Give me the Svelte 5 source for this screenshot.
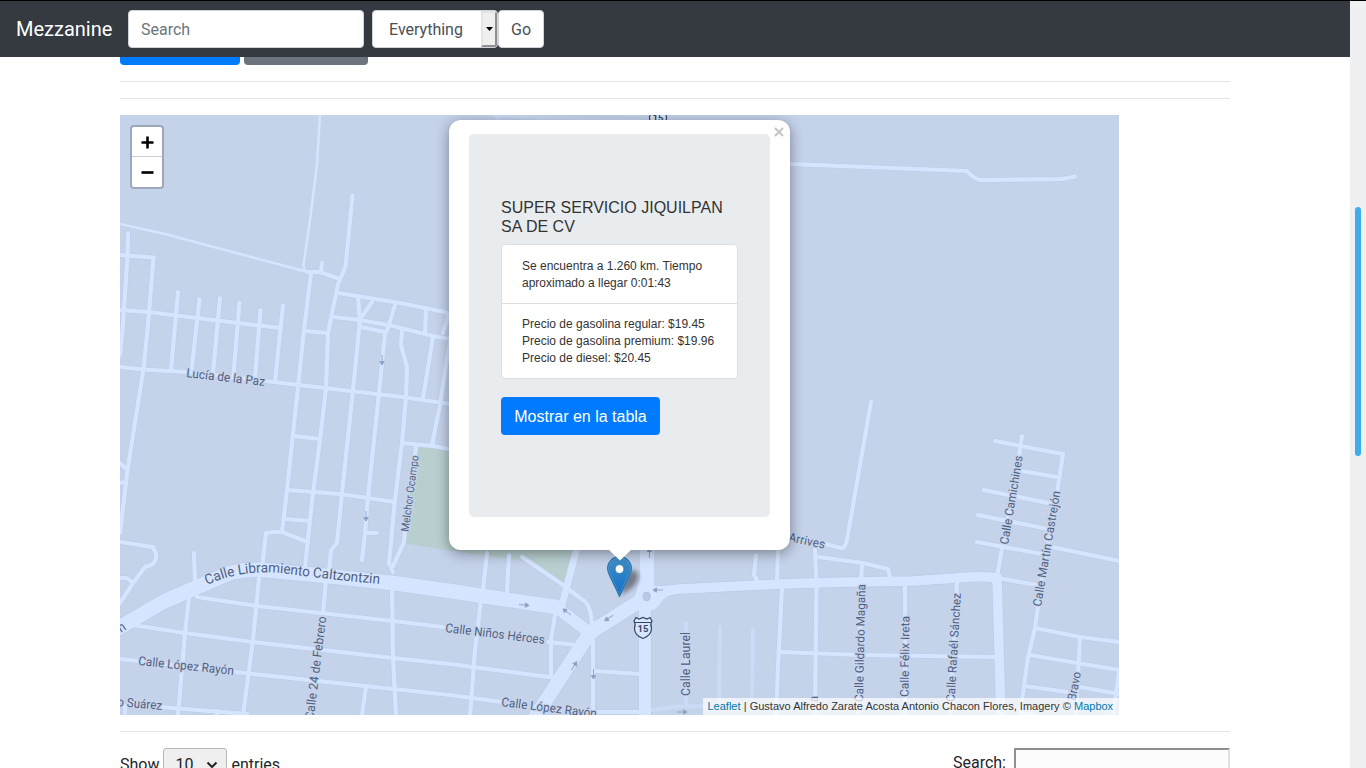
<script>
  const lanes = [
    'M153.500 257.500L147.500 330L143.500 369L127.500 470L120 533', 'M120 255L153.500 257.500',
    'M128 233L127.500 257L122.500 330L120 355',
    'M120 310L148 312L217 320.500L281 328',
    'M178 292L171 370', 'M199.500 299L191.500 371', 'M220 298L213 373', 'M239.500 302.500L233.500 375',
    'M260.500 310L255 377', 'M283 305.500L280.500 328L275 382',
    'M120 367L143.500 369.500L187 372L265 381L406 397.500L450 404',
    'M307 272L320 272L339.500 279', 'M322 262.500L321 272',
    'M352.500 195.500L345.500 267L338 284L328 333L326 388L320 440L313 493L310 520L305 568',
    'M311 273L304 330L298 387L287 490L282 532',
    'M338 293L400 303L445 312Q449 313 448 318L443 333',
    'M333 317L360 320L393 326L433 336L450 339',
    'M358 298L360 320L353 390L342 493L337 543L331 550L329 572', 'M326 580L323 613',
    'M372 302L361 318',
    'M395 305L388 328L385 334L379 393L368 497L365 533L362 560', 'M365 533L377 533',
    'M361 327L385 332', 'M426 310L425 333',
    'M402 330L401 345L407 367L406 397L402 443L395 500L389 563L393 572',
    'M433 337L423 398', 'M452 330L448 353L440 405L432 445',
    'M403 443L433 446L450 449', 'M416 446L415 455', 'M405 530L404 542L393 566',
    'M304 331L328 333', 'M293 436L320 439', 'M288 490L340 494L395 502', 'M285 519L310 521',
    'M120 463L127.500 470', 'M120 483L126 482',
    'M120 542L152.500 547L156 553Q157 562 151 565L145 567L133 583L120 603', 'M120 578L127 578L133 583',
    'M194 553L195 582', 'M262 568L266 533L275 532L282 532L305 541',
    'M133 625L185 633L253 642L393 658L450 664L557 678',
    'M197 597L257 606L393 621L443 627', 'M120 659L138 661L235 672L393 689L450 695L502 702',
    'M160 707L247 714', 'M189 598L185 633L178 715', 'M259 578L253 640L243 715',
    'M392 585L393 657L396 715', 'M366 687L362 715', 'M125 706L125 715', 'M217 711L217 715',
    'M522 557L560 583L583 600Q592 606 592 628',
    'M487 553L483 590', 'M509 555L507 592', 'M481 600L475 650L470 715',
    'M555 615L551 640L551 677', 'M548 642L577 645',
    'M593 638L593 715', 'M595 671L640 674', 'M595 712L640 712',
    'M782 587L778 667L776 715', 'M778 548L777 582', 'M756 555L754 575L758 582',
    'M780 652L860 655L995 657', 'M815 550L816.500 583L815 715',
    'M818 557L863 563L888 569L890 577', 'M862 563L861 585L858 715',
    'M905 583L905 715', 'M957 582L955 620L950 715',
    'M871 402L847 540Q845 549 841 548L825 544',
    'M1022 436L1017 470L1002 548L997 577',
    'M995 441L1063 454L1057 493L1042 577L1035 628L1028 657L1020 715',
    'M1022 471L1057 477', 'M984 490L1053 504', 'M978 515L1048 529', 'M977 542L1042 554', 'M1052 547L1119 561',
    'M997 578L1037 585', 'M1035 628L1080 637L1119 642', 'M1030 655L1077 663L1119 670',
    'M1025 686L1067 692', 'M1080 687L1119 694', 'M1080 637L1076 715', 'M1119 672L1113 715', 'M1022 713L1035 715',
    'M790 164L967 171Q973 178 980 180L1062 179L1075 176.500'
  ];
  const faint = ['M686 623V705', 'M720 627L719 705', 'M753 629L752 705', 'M652 710L673 707L705 706', 'M493 113L501 122', 'M499 116L565 119L640 121'];
  const narrow = ['M120 224L165 234L304 271', 'M320 115L317 165L310 220L303.500 265Q304 271 308 272'];
  const main = [
    { d: 'M110 633L163 602L197 587L230 573Q246 569 263 570L327 576L393 583L450 591L556 607', w: 14.5 },
    { d: 'M556 607L590 633', w: 12 },
    { d: 'M530 725L587 637L594 630L640 601', w: 14 },
    { d: 'M647 540V598', w: 14.5 },
    { d: 'M645 600V720', w: 12 },
    { d: 'M577 548L562 605', w: 7 },
    { d: 'M650 592L680 589L780 584L847 582L913 581L970 577Q984 576 998 578', w: 9.5 },
    { d: 'M997 578L1001 720', w: 9.5 }
  ];
  const labels = [
    { t: 'Lucía de la Paz', d: 'M186 377L265 386', n: 79, s: 12.5 },
    { t: 'Melchor Ocampo', d: 'M408.500 532L419 454', n: 77, s: 11 },
    { t: 'Calle Libramiento Caltzontzin', d: 'M207 585Q243 568 288 574T381 584', n: 175, s: 14, clear: true },
    { t: 'Calle López Rayón', d: 'M138 665L234 675', n: 96, s: 12.5 },
    { t: 'Calle López Rayón', d: 'M501 706L597 718', n: 96, s: 12.5 },
    { t: 'o Suárez', d: 'M117 706L163 710', n: 45, s: 12.5 },
    { t: 'n', d: 'M121 633L129 628', n: 7, s: 14, clear: true },
    { t: 'Calle 24 de Febrero', d: 'M313.500 720L326.500 615', n: 104, s: 12.5 },
    { t: 'Calle Niños Héroes', d: 'M445 632L545 644', n: 100, s: 12.5 },
    { t: 'Calle Laurel', d: 'M690.500 696V632', n: 64, s: 12 },
    { t: 'Arrives', d: 'M788 541L825 549', n: 37, s: 12.5 },
    { t: 'Calle Gildardo Magaña', d: 'M863 702L865.500 584', n: 118, s: 12 },
    { t: 'Calle Félix Ireta', d: 'M908.500 697L909.500 616', n: 81, s: 12 },
    { t: 'Calle Rafaél Sánchez', d: 'M954.500 702L961 592', n: 109, s: 12 },
    { t: 'Calle Camichines', d: 'M1008 545L1023 455', n: 90, s: 12 },
    { t: 'Calle Martín Castrejón', d: 'M1041 607L1060.500 491', n: 117, s: 12 },
    { t: 'Bravo', d: 'M1075.500 701L1081 672', n: 29, s: 12 },
    { t: 'a', d: 'M818 702L818 695', n: 6, s: 12 }
  ];
  const arrows = [
    [382, 360, 90], [366, 516, 90], [524, 605, 5], [567, 612, 217], [609, 618, 147],
    [574, 666, 302], [593.5, 674, 90], [658, 590, 180], [682, 712, 0], [649.500, 553, 270]
  ];
</script>

<div class="page">
  <header>
    <a class="brand" href="#top">Mezzanine</a>
    <div class="field">Search</div>
    <div class="select"><span>Everything</span><i><svg width="7" height="4"><path d="M0 0H7L3.500 4Z" /></svg></i></div>
    <button class="go">Go</button>
  </header>
  <main>
    <div class="actions"><span class="primary"></span><span class="secondary"></span></div>
    <hr />
    <hr />
    <section class="map">
      <svg class="tiles" viewBox="120 115 999 600" width="999" height="600">
        <defs>
          <linearGradient id="pin" x1="0" y1="0" x2="0" y2="1"><stop offset="0" stop-color="#4090c6" /><stop offset="1" stop-color="#126fc6" /></linearGradient>
          <filter id="soft" x="-50%" y="-50%" width="200%" height="200%"><feGaussianBlur stdDeviation="2.800" /></filter>
          {#each labels as l, i}<path id={'street' + i} d={l.d} />{/each}
        </defs>
        <rect x="120" y="115" width="999" height="600" fill="#c4d2ea" />
        <path d="M417 447L450 449L600 460L575 550L565 583L522 561L440 549L403 543Z" fill="#b9cfcf" />
        <g fill="none" stroke-linecap="round" stroke-linejoin="round">
          <g stroke="#bccbe8">
            {#each lanes as d}<path {d} stroke-width="5.200" />{/each}
            {#each main as r}<path d={r.d} stroke-width={r.w + 1.4} />{/each}
            <circle cx="647" cy="597" r="12.500" />
          </g>
          <g stroke="#cbdaf5" stroke-width="4">{#each faint as d}<path {d} />{/each}</g>
          <g stroke="#d6e5ff">
            {#each narrow as d}<path {d} stroke-width="2.500" />{/each}
            {#each lanes as d}<path {d} stroke-width="4.200" />{/each}
            {#each main as r}<path d={r.d} stroke-width={r.w} />{/each}
          </g>
        </g>
        <path d="M640 580L634 598L638 610H654L660 604Q665 595 675 594V586H656Z" fill="#d6e5ff" />
        <ellipse cx="646.700" cy="596.500" rx="3.500" ry="4.200" fill="#b9c9e5" stroke="#afc0df" />
        <g class="arrows">
          {#each arrows as a}<path d="M-5 0H5M1.500 -2.200L5 0L1.500 2.200Z" transform={`translate(${a[0]} ${a[1]}) rotate(${a[2]})`} />{/each}
        </g>
        {#each labels as l, i}
          <text class:clear={l.clear} font-size={l.s} textLength={l.n} lengthAdjust="spacingAndGlyphs"><textPath href={'#street' + i} textLength={l.n} lengthAdjust="spacingAndGlyphs">{l.t}</textPath></text>
        {/each}
        {#each [[643, 628], [658, 117]] as s}
          <g transform={`translate(${s[0]} ${s[1]})`}>
            <path d="M-7 -10.500L-4 -9L0 -10.500L4 -9L7 -10.500L9 -7Q7 -4 8.500 0Q9 7 0 10.500Q-9 7 -8.500 0Q-7 -4 -9 -7Z" fill="#d9e5fa" stroke="#34476a" stroke-width="1.200" />
            <path d="M-8 -5.500H8" stroke="#34476a" />
            <text class="shield" x="0" y="3.700" text-anchor="middle">15</text>
          </g>
        {/each}
        <path d="M620 596L624 580Q629 567 636 571Q642 577 633 587Z" fill="#000" opacity=".42" filter="url(#soft)" />
        <g transform="translate(607 556)">
          <path d="M12.500 .6C5.800 .6 .6 6 .6 12.500C.6 15.500 1.800 18.300 3 20.600L12.500 40.300L22 20.600C23.200 18.300 24.400 15.500 24.400 12.500C24.400 6 19.200 .6 12.500 .6Z" fill="url(#pin)" stroke="#2e75aa" stroke-width="1.100" />
          <path d="M12.500 1.800C6.500 1.800 1.800 6.600 1.800 12.500C1.800 15.300 3 17.900 4.100 20.100L12.500 37.600L20.900 20.100C22 17.900 23.200 15.300 23.200 12.500C23.200 6.600 18.500 1.800 12.500 1.800Z" fill="none" stroke="#fff" opacity=".13" />
          <circle cx="12.500" cy="13" r="4.500" fill="#fff" stroke="#2f78ae" />
        </g>
      </svg>
      <div class="zoom"><b><svg viewBox="0 0 13 13"><path d="M.5 6.500H12.500M6.500 .5V12.500" /></svg></b><b><svg viewBox="0 0 13 13"><path d="M.5 6.500H12.500" /></svg></b></div>
      <div class="popup">
        <svg class="close" viewBox="0 0 10 10"><path d="M1 1L9 9M9 1L1 9" /></svg>
        <div class="jumbo">
          <h5>SUPER SERVICIO JIQUILPAN SA DE CV</h5>
          <ul>
            <li>Se encuentra a 1.260 km. Tiempo aproximado a llegar 0:01:43</li>
            <li>Precio de gasolina regular: $19.45<br />Precio de gasolina premium: $19.96<br />Precio de diesel: $20.45</li>
          </ul>
          <button class="show">Mostrar en la tabla</button>
        </div>
        <svg class="tip" width="24" height="12"><path d="M0 0H24L12 11.500Z" fill="#fff" /></svg>
      </div>
      <div class="credit"><a href="#leaflet">Leaflet</a> | Gustavo Alfredo Zarate Acosta Antonio Chacon Flores, Imagery © <a href="#mapbox">Mapbox</a></div>
    </section>
    <hr />
    <div class="controls">
      <div class="length"><span>Show</span><div class="count">10<svg width="12" height="8"><path d="M1.500 1.500L6 6L10.500 1.500" /></svg></div><span>entries</span></div>
      <div class="filter"><span>Search:</span><div class="query"></div></div>
    </div>
  </main>
  <div class="scrollbar"><i></i></div>
</div>

<style>
  :global(body) { margin: 0; overflow: hidden; }
  * { box-sizing: border-box; }
  .page { position: relative; width: 1366px; height: 768px; overflow: hidden; background: #fff; color: #212529; font: 16px/24px Roboto, sans-serif; border-top: 1px solid #000; }
  header { width: 1350px; height: 56px; background: #343a40; display: flex; align-items: center; padding: 0 16px; }
  .brand { color: #fff; font-size: 20px; line-height: 30px; width: 96px; margin-right: 16px; text-decoration: none; white-space: nowrap; }
  .field { width: 236px; height: 38px; padding: 7px 12px 5px; background: #fff; border: 1px solid #ced4da; border-radius: 4px; color: #6c757d; margin-right: 8px; }
  .select { width: 126px; height: 38px; border: 1px solid #ced4da; border-radius: 4px; background: #fff; color: #495057; display: flex; justify-content: space-between; padding-left: 16px; line-height: 38px; overflow: hidden; }
  .select i { width: 16px; height: 36px; background: #efefef; border: 2px solid; border-color: #e3e3e3 #8f8f8f #8f8f8f #e3e3e3; display: flex; align-items: center; justify-content: center; }
  .go { width: 46px; height: 38px; padding: 2px 0 0; border: 1px solid #ced4da; border-radius: 4px; background: #fff; color: #495057; font: inherit; }
  main { width: 1110px; margin-left: 120px; }
  .actions { display: flex; gap: 4px; height: 8px; }
  .actions span { border-radius: 0 0 4px 4px; }
  .primary { width: 120px; background: #007bff; }
  .secondary { width: 124px; background: #6c757d; }
  hr { border: 0; height: 1px; background: #e5e5e5; margin: 16px 0; }
  .map { position: relative; width: 999px; height: 600px; overflow: hidden; font-family: "Liberation Sans", Arial, sans-serif; }
  .tiles { display: block; }
  .tiles text { font-family: Roboto, sans-serif; fill: #50607f; stroke: #c7d5ed; stroke-width: 2.5px; paint-order: stroke; stroke-linejoin: round; }
  .tiles text.clear { stroke: none; }
  .tiles text.shield { font-size: 9.5px; font-weight: 700; fill: #34476a; stroke: none; }
  .arrows path { fill: #8fa1c4; stroke: #8fa1c4; stroke-width: .9; }
  .zoom { position: absolute; left: 10px; top: 10px; width: 34px; height: 64px; border: 2px solid #9da8bb; border-radius: 4px; background: #fff; }
  .zoom b { display: flex; height: 29px; padding: 1px 0 0 1px; align-items: center; justify-content: center; }
  .zoom b + b { height: 31px; padding-top: 0; border-top: 1px solid #ccc; }
  .zoom svg { width: 13px; height: 13px; stroke: #000; stroke-width: 2.6; }
  .popup { position: absolute; left: 329px; top: 5px; width: 341px; height: 430px; padding: 14px 20px; background: #fff; border-radius: 12px; box-shadow: 0 3px 14px rgba(0, 0, 0, .4); color: #333; }
  .close { position: absolute; right: 6px; top: 7px; width: 10px; height: 10px; stroke: #c3c3c3; stroke-width: 1.9; }
  .tip { position: absolute; left: 158.500px; top: 429px; }
  .jumbo { height: 383px; padding: 64px 32px; background: #e9ecef; border-radius: 5px; }
  h5 { margin: 0 0 8px; font-size: 16px; line-height: 19.2px; font-weight: 400; }
  ul { list-style: none; margin: 0 0 18px; padding: 0; border: 1px solid #dfdfdf; border-radius: 4px; background: #fff; font-size: 12px; line-height: 16.8px; }
  li { padding: 12px 20px; }
  li:first-child { padding: 12.7px 20px 11.3px; }
  li + li { border-top: 1px solid #dfdfdf; }
  .show { display: block; width: 159px; height: 38px; padding: 2px 0 0; border: 0; border-radius: 4px; background: #007bff; color: #fff; font: 16px/24px "Liberation Sans", Arial, sans-serif; white-space: nowrap; }
  .credit { position: absolute; right: 0; bottom: 0; width: 416px; height: 17px; padding: 0 4.5px; background: rgba(255, 255, 255, .7); color: #333; font-size: 11px; line-height: 16.5px; white-space: nowrap; word-spacing: .08px; }
  .credit a { color: #0078a8; text-decoration: none; }
  .controls { display: flex; justify-content: space-between; }
  .length { display: flex; align-items: flex-start; gap: 4px; line-height: 34px; }
  .count { width: 64px; height: 34px; padding: 0 8px 0 11px; border: 1px solid #b8b8b8; border-radius: 3px; background: #efefef; display: flex; align-items: center; justify-content: space-between; }
  .count svg { fill: none; stroke: #222; stroke-width: 2; margin-top: -1px; }
  .filter { display: flex; gap: 8px; line-height: 30px; }
  .query { width: 216px; height: 30px; border: 2px solid; border-color: #8f8f8f #e0e0e0 #e0e0e0 #8f8f8f; background: #fcfcfc; }
  .scrollbar { position: absolute; right: 0; top: 0; width: 16px; height: 767px; background: #eff0f1; padding: 206px 5px 0; }
  .scrollbar i { display: block; width: 6px; height: 249px; border-radius: 3px; background: #3daee9; }
</style>
